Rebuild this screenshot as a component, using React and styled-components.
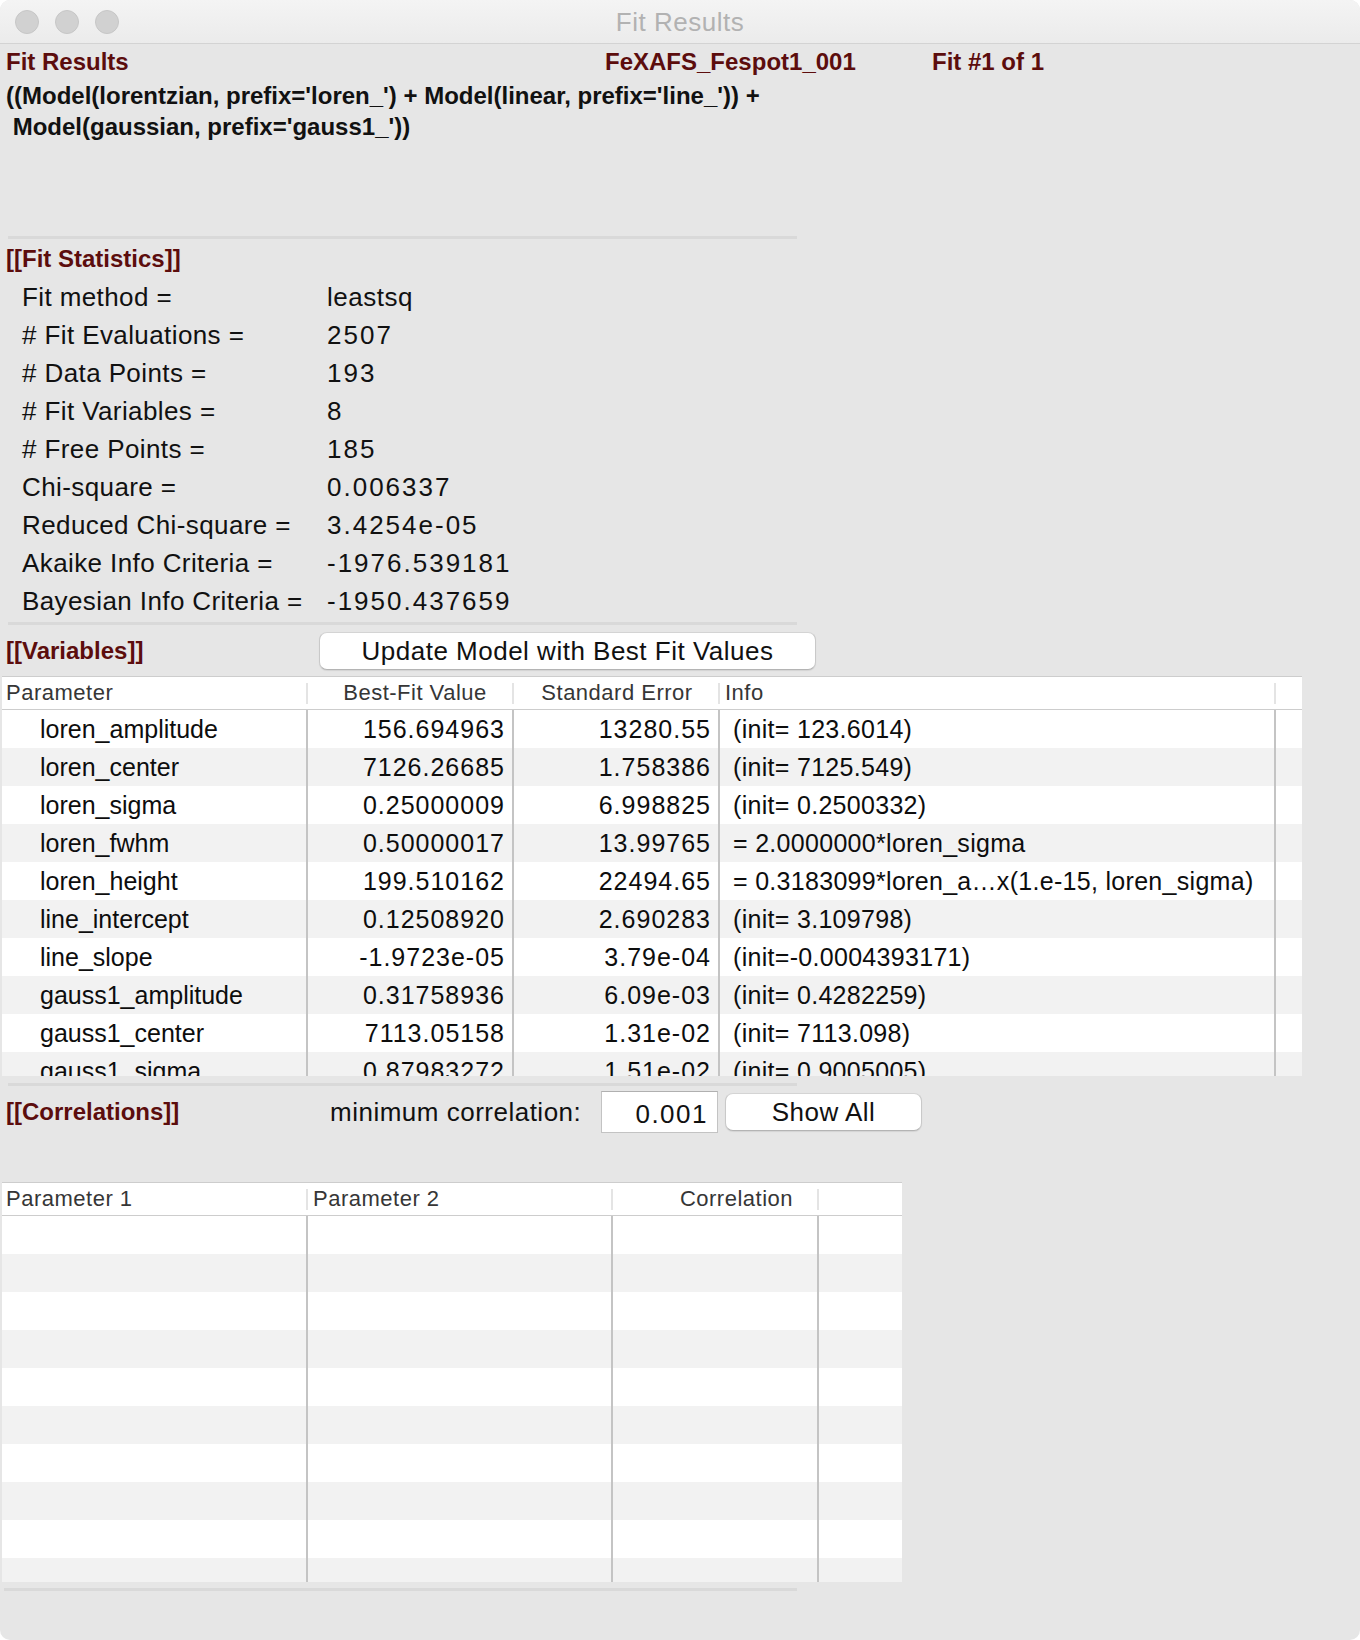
import React from "react";
import styled, { createGlobalStyle } from "styled-components";

const GlobalStyle = createGlobalStyle`
  html, body { margin: 0; padding: 0; background: #ffffff; }
  body { font-family: "Liberation Sans", Arial, Helvetica, sans-serif; }
  * { box-sizing: border-box; }
`;

const Window = styled.div`
  width: 1360px;
  height: 1640px;
  background: #e6e6e6;
  border-radius: 10px;
  overflow: hidden;
  display: flex;
  flex-direction: column;
`;

const TitleBar = styled.div`
  flex: none;
  height: 44px;
  display: grid;
  grid-template-columns: 1fr auto 1fr;
  align-items: center;
  background: linear-gradient(#f4f4f4, #ebebeb);
  border-bottom: 1px solid #d3d3d3;
`;

const Lights = styled.div`
  display: flex;
  gap: 16px;
  padding-left: 15px;
`;

const Light = styled.span`
  width: 24px;
  height: 24px;
  border-radius: 50%;
  background: #d1d1d1;
  border: 1px solid #c6c6c6;
`;

const WindowTitle = styled.div`
  font-size: 26px;
  letter-spacing: 0.5px;
  color: #b2b2b2;
  line-height: 30px;
`;

const HeaderRow = styled.div`
  flex: none;
  height: 36px;
  display: flex;
  align-items: center;
  padding-left: 6px;
`;

const HeadText = styled.div`
  flex: none;
  width: ${(p) => (p.$width ? `${p.$width}px` : "auto")};
  font-size: 24px;
  font-weight: bold;
  color: #5c0d0d;
  white-space: nowrap;
`;

const ModelText = styled.div`
  flex: none;
  height: 156px;
  padding-left: 6px;
  font-size: 24px;
  font-weight: bold;
  line-height: 31px;
  color: #111;
  white-space: pre;
`;

const Separator = styled.div`
  flex: none;
  margin-top: ${(p) => p.$top || 0}px;
  margin-left: ${(p) => (p.$left != null ? p.$left : 8)}px;
  width: ${(p) => 797 - (p.$left != null ? p.$left : 8)}px;
  height: 3px;
  background: #d9d9d9;
`;

const SectionHeading = styled.div`
  flex: none;
  width: ${(p) => (p.$width ? `${p.$width}px` : "auto")};
  height: ${(p) => (p.$height ? `${p.$height}px` : "auto")};
  display: flex;
  align-items: center;
  padding-left: ${(p) => p.$pad || 0}px;
  font-size: 24px;
  font-weight: bold;
  color: #5c0d0d;
  white-space: nowrap;
`;

const StatsList = styled.div`
  flex: none;
  display: flex;
  flex-direction: column;
`;

const StatRow = styled.div`
  height: 38px;
  display: grid;
  grid-template-columns: 304px 1fr;
  align-items: center;
  padding-left: 22px;
  font-size: 26px;
  color: #111;
  white-space: nowrap;
`;

const StatLabel = styled.span`
  letter-spacing: 0.4px;
`;

const StatValue = styled.span`
  padding-left: 1px;
  letter-spacing: ${(p) => (p.$numeric ? "2px" : "0.5px")};
`;

const ActionRow = styled.div`
  flex: none;
  display: flex;
  align-items: center;
  padding: ${(p) => p.$pad || "0"};
  padding-left: 6px;
`;

const MacButton = styled.button`
  flex: none;
  width: ${(p) => p.$width}px;
  height: 38px;
  margin-left: ${(p) => p.$gap || 0}px;
  padding: 0;
  background: #ffffff;
  border: 1px solid #c9c9c9;
  border-top-color: #d4d4d4;
  border-bottom-color: #b4b4b4;
  border-radius: 8px;
  box-shadow: 0 1px 1px rgba(0, 0, 0, 0.08);
  font-family: inherit;
  font-size: 26px;
  letter-spacing: 0.5px;
  color: #111;
  cursor: default;
`;

const InlineLabel = styled.span`
  flex: none;
  width: ${(p) => p.$width}px;
  font-size: 26px;
  letter-spacing: 0.5px;
  color: #111;
  white-space: nowrap;
`;

const NumberInput = styled.div`
  flex: none;
  width: 117px;
  height: 42px;
  padding: 4px 9px 0 0;
  display: flex;
  align-items: center;
  justify-content: flex-end;
  background: #ffffff;
  border: 1px solid #c3c3c3;
  border-top-color: #b0b0b0;
  font-size: 26px;
  letter-spacing: 1.5px;
  color: #111;
`;

const Table = styled.div`
  flex: none;
  margin-left: 2px;
  width: ${(p) => p.$width}px;
  background: #ffffff;
  border-top: 1px solid #cdcdcd;
`;

const HeadRow = styled.div`
  height: 33px;
  display: grid;
  grid-template-columns: ${(p) => p.$cols};
  align-items: center;
  border-bottom: 1px solid #cdcdcd;
`;

const HeadCell = styled.div`
  height: 21px;
  display: flex;
  align-items: center;
  justify-content: ${(p) =>
    p.$align === "center" ? "center" : p.$align === "right" ? "flex-end" : "flex-start"};
  padding: ${(p) => p.$pad || "0 0 0 4px"};
  border-right: ${(p) => (p.$last ? "none" : "2px solid #e4e4e4")};
  font-size: 22px;
  letter-spacing: 0.5px;
  color: #363636;
  white-space: nowrap;
`;

const Body = styled.div`
  height: 366px;
  overflow: hidden;
`;

const BodyRow = styled.div`
  height: 38px;
  display: grid;
  grid-template-columns: ${(p) => p.$cols};
  background: ${(p) => (p.$alt ? "#f2f2f2" : "#ffffff")};
`;

const Cell = styled.div`
  display: flex;
  align-items: center;
  justify-content: ${(p) => (p.$right ? "flex-end" : "flex-start")};
  padding: ${(p) => p.$pad || "0"};
  border-right: ${(p) => (p.$last ? "none" : "2px solid #c4c4c4")};
  font-size: 25px;
  letter-spacing: ${(p) => p.$ls || "0"};
  color: #0d0d0d;
  white-space: nowrap;
  overflow: hidden;
`;

const VAR_COLS = "306px 206px 206px 556px 1fr";
const CORR_COLS = "306px 305px 206px 1fr";

const stats = [
  ["Fit method =", "leastsq", false],
  ["# Fit Evaluations =", "2507", true],
  ["# Data Points =", "193", true],
  ["# Fit Variables =", "8", true],
  ["# Free Points =", "185", true],
  ["Chi-square =", "0.006337", true],
  ["Reduced Chi-square =", "3.4254e-05", true],
  ["Akaike Info Criteria =", "-1976.539181", true],
  ["Bayesian Info Criteria =", "-1950.437659", true],
];

const variables = [
  ["loren_amplitude", "156.694963", "13280.55", "(init= 123.6014)"],
  ["loren_center", "7126.26685", "1.758386", "(init= 7125.549)"],
  ["loren_sigma", "0.25000009", "6.998825", "(init= 0.2500332)"],
  ["loren_fwhm", "0.50000017", "13.99765", "= 2.0000000*loren_sigma"],
  ["loren_height", "199.510162", "22494.65", "= 0.3183099*loren_a\u2026x(1.e-15, loren_sigma)"],
  ["line_intercept", "0.12508920", "2.690283", "(init= 3.109798)"],
  ["line_slope", "-1.9723e-05", "3.79e-04", "(init=-0.0004393171)"],
  ["gauss1_amplitude", "0.31758936", "6.09e-03", "(init= 0.4282259)"],
  ["gauss1_center", "7113.05158", "1.31e-02", "(init= 7113.098)"],
  ["gauss1_sigma", "0.87983272", "1.51e-02", "(init= 0.9005005)"],
];

export default function App() {
  return (
    <>
      <GlobalStyle />
      <Window>
        <TitleBar>
          <Lights>
            <Light />
            <Light />
            <Light />
          </Lights>
          <WindowTitle>Fit Results</WindowTitle>
          <div />
        </TitleBar>

        <HeaderRow>
          <HeadText $width={599}>Fit Results</HeadText>
          <HeadText $width={327}>FeXAFS_Fespot1_001</HeadText>
          <HeadText>Fit #1 of 1</HeadText>
        </HeaderRow>

        <ModelText>
          {"((Model(lorentzian, prefix='loren_') + Model(linear, prefix='line_')) +\n Model(gaussian, prefix='gauss1_'))"}
        </ModelText>

        <Separator />
        <SectionHeading $height={39} $pad={6}>[[Fit Statistics]]</SectionHeading>
        <StatsList>
          {stats.map(([label, value, numeric]) => (
            <StatRow key={label}>
              <StatLabel>{label}</StatLabel>
              <StatValue $numeric={numeric}>{value}</StatValue>
            </StatRow>
          ))}
        </StatsList>

        <Separator $top={2} />
        <ActionRow $pad="7px 0 6px 0">
          <SectionHeading $width={313}>[[Variables]]</SectionHeading>
          <MacButton $width={497}>Update Model with Best Fit Values</MacButton>
        </ActionRow>

        <Table $width={1300}>
          <HeadRow $cols={VAR_COLS}>
            <HeadCell>Parameter</HeadCell>
            <HeadCell $align="center" $pad="0 0 0 10px">Best-Fit Value</HeadCell>
            <HeadCell $align="center" $pad="0 0 0 2px">Standard Error</HeadCell>
            <HeadCell $pad="0 0 0 5px">Info</HeadCell>
            <HeadCell $last />
          </HeadRow>
          <Body>
            {variables.map((row, i) => (
              <BodyRow key={row[0]} $cols={VAR_COLS} $alt={i % 2 === 1}>
                <Cell $pad="0 0 0 38px">{row[0]}</Cell>
                <Cell $right $pad="0 7px 0 0" $ls="1px">{row[1]}</Cell>
                <Cell $right $pad="0 7px 0 0" $ls="1px">{row[2]}</Cell>
                <Cell $pad="0 0 0 13px" $ls="0.3px">{row[3]}</Cell>
                <Cell $last />
              </BodyRow>
            ))}
          </Body>
        </Table>

        <Separator $top={7} />
        <ActionRow $pad="5px 0 49px 0">
          <SectionHeading $width={324}>[[Correlations]]</SectionHeading>
          <InlineLabel $width={271}>minimum correlation:</InlineLabel>
          <NumberInput>0.001</NumberInput>
          <MacButton $width={197} $gap={7}>Show All</MacButton>
        </ActionRow>

        <Table $width={900}>
          <HeadRow $cols={CORR_COLS}>
            <HeadCell>Parameter 1</HeadCell>
            <HeadCell $pad="0 0 0 5px">Parameter 2</HeadCell>
            <HeadCell $align="right" $pad="0 24px 0 0">Correlation</HeadCell>
            <HeadCell $last />
          </HeadRow>
          <Body>
            {Array.from({ length: 10 }).map((_, i) => (
              <BodyRow key={i} $cols={CORR_COLS} $alt={i % 2 === 1}>
                <Cell />
                <Cell />
                <Cell />
                <Cell $last />
              </BodyRow>
            ))}
          </Body>
        </Table>

        <Separator $top={6} $left={4} />
      </Window>
    </>
  );
}
